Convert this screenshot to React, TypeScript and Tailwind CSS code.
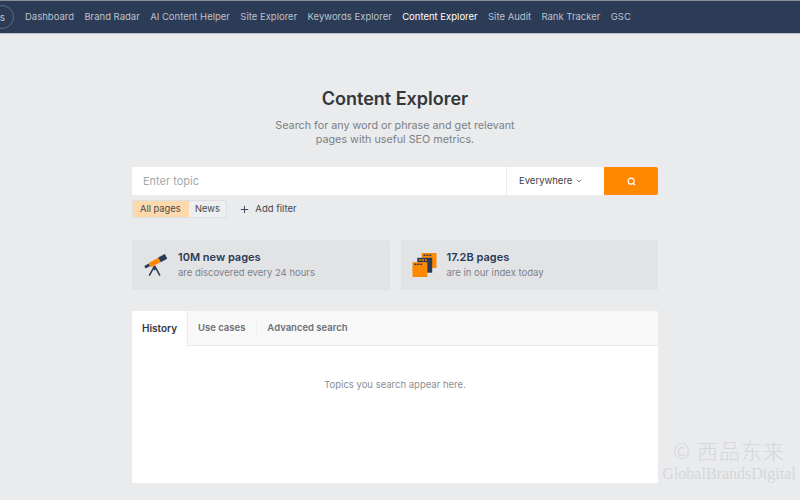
import { ChevronDown, Plus, Search } from "lucide-react";

const navItems = [
  "Dashboard",
  "Brand Radar",
  "AI Content Helper",
  "Site Explorer",
  "Keywords Explorer",
  "Content Explorer",
  "Site Audit",
  "Rank Tracker",
  "GSC",
];

const tabs = ["Use cases", "Advanced search"];

const TelescopeIcon = () => (
  <svg width="28" height="26" viewBox="0 0 28 26">
    <path d="M1.5 14 L6.5 11.2 L8 14 L3 16.8 Z" fill="#2b3a55" />
    <path d="M6.5 10.8 L17 5 L19.5 10 L8.8 15.6 Z" fill="#ff8800" />
    <path d="M17 4.6 L24.5 0.8 L27.2 6 L19.8 10 Z" fill="#2b3a55" />
    <path d="M13 14 L7 25 M13 14 L19 25 M13 14 L13 19" stroke="#2b3a55" strokeWidth="1.7" fill="none" />
  </svg>
);

const PagesIcon = () => (
  <svg width="26" height="26" viewBox="0 0 26 26">
    <rect x="10" y="0.5" width="15.5" height="15.5" fill="#ff8800" />
    <rect x="12" y="2" width="2" height="1.6" fill="#2b3a55" />
    <rect x="15" y="2" width="2" height="1.6" fill="#2b3a55" />
    <rect x="18" y="2" width="2" height="1.6" fill="#2b3a55" />
    <rect x="5.5" y="5.5" width="15.5" height="15.5" fill="#2b3a55" />
    <rect x="7.5" y="7" width="2" height="1.6" fill="#ff8800" />
    <rect x="10.5" y="7" width="2" height="1.6" fill="#ff8800" />
    <rect x="13.5" y="7" width="2" height="1.6" fill="#ff8800" />
    <rect x="0.5" y="10" width="15.5" height="15.5" fill="#ff8800" />
    <rect x="2.5" y="11.5" width="2" height="1.6" fill="#2b3a55" />
    <rect x="5.5" y="11.5" width="2" height="1.6" fill="#2b3a55" />
    <rect x="8.5" y="11.5" width="2" height="1.6" fill="#2b3a55" />
  </svg>
);

const StatCard = ({ icon, title, sub }: { icon: React.ReactNode; title: string; sub: string }) => (
  <div className="flex-1 h-[50px] bg-[#e1e3e5] flex items-center pl-[11px] gap-[10px] rounded-[1px]">
    <div className="w-[25px] flex justify-center shrink-0">{icon}</div>
    <div>
      <div className="text-[11px] leading-[15px] font-semibold text-[#2b3a55]">{title}</div>
      <div className="text-[9.5px] leading-[15px] text-[#7d828a]">{sub}</div>
    </div>
  </div>
);

export default function App() {
  return (
    <div className="relative h-[500px] w-[800px] overflow-hidden bg-[#e9ebed] font-['Inter',sans-serif]">
      <div className="h-[34px] bg-[#2c3b56] border-t border-t-[#8a8f99] border-b border-b-[#b8bcc4] flex items-center">
        <div className="h-[24px] w-[24px] -ml-[10px] mr-[11px] shrink-0 rounded-full border border-[#5f6b82] flex items-center justify-end pr-[8px] text-[10px] text-[#c3c8d2]">
          s
        </div>
        <nav className="flex gap-[10.4px]">
          {navItems.map((item) => (
            <a
              key={item}
              className={`text-[9.5px] whitespace-nowrap ${item === "Content Explorer" ? "text-white" : "text-[#bcc2cd]"}`}
            >
              {item}
            </a>
          ))}
        </nav>
      </div>

      <div className="w-[790px] flex flex-col items-center pt-[54px]">
        <h1 className="text-[18px] leading-[22px] font-semibold text-[#33363b]">Content Explorer</h1>
        <p className="mt-[9px] text-[10.75px] leading-[14px] text-[#7b7f86] text-center">
          Search for any word or phrase and get relevant
          <br />
          pages with useful SEO metrics.
        </p>

        <div className="w-[526px] mt-[20px]">
          <div className="flex h-[28px] rounded-[2px] overflow-hidden bg-white">
            <div className="flex-1 flex items-center pl-[11px] text-[11px] text-[#a4a8ae] border-r border-r-[#eceef0]">
              Enter topic
            </div>
            <div className="w-[97px] flex items-center pl-[12px] gap-[3px] text-[9.5px] text-[#3c4047]">
              Everywhere
              <ChevronDown size={8} strokeWidth={2} />
            </div>
            <div className="w-[54px] bg-[#ff8800] flex items-center justify-center text-white">
              <Search size={9} strokeWidth={3} />
            </div>
          </div>

          <div className="flex items-center mt-[5px] h-[18px]">
            <div className="flex h-[18px] rounded-[2px] border border-[#dcdee1] overflow-hidden text-[9.3px] text-[#44484f]">
              <span className="bg-[#fdd9ac] pl-[7px] pr-[8px] leading-[16px]">All pages</span>
              <span className="bg-[#eceef0] px-[6.5px] leading-[16px]">News</span>
            </div>
            <div className="flex items-center ml-[12px] gap-[5px] text-[9.5px] text-[#44484f]">
              <Plus size={11} strokeWidth={2} className="text-[#2b3a55]" />
              Add filter
            </div>
          </div>

          <div className="flex gap-[11px] mt-[22px]">
            <StatCard icon={<TelescopeIcon />} title="10M new pages" sub="are discovered every 24 hours" />
            <StatCard icon={<PagesIcon />} title="17.2B pages" sub="are in our index today" />
          </div>

          <div className="mt-[21px] h-[172px] bg-white">
            <div className="flex h-[35px] bg-[#f8f8f8] border-b border-b-[#e8e9eb]">
              <div className="w-[56px] h-[35px] bg-white flex items-center justify-center text-[10px] font-semibold text-[#33363b] border-r border-r-[#e8e9eb]">
                History
              </div>
              <div className="flex items-center text-[9.5px] font-semibold text-[#6c7077]">
                <span className="pl-[10px] pr-[11px]">{tabs[0]}</span>
                <span className="pl-[10px] border-l border-l-[#eceef0] leading-[14px]">{tabs[1]}</span>
              </div>
            </div>
            <div className="pt-[32px] text-center text-[9.5px] leading-[14px] text-[#8a8e94]">
              Topics you search appear here.
            </div>
          </div>
        </div>
      </div>

      <div className="absolute left-[660px] top-[438px] w-[138px] text-center text-[#d5d7db] pointer-events-none">
        <div className="text-[21px] leading-[24px] font-['Noto_Sans_CJK_SC',sans-serif] font-light tracking-[1px]">© 西品东来</div>
        <div className="text-[16px] leading-[20px] mt-[2px] whitespace-nowrap font-['Liberation_Serif',serif]">GlobalBrandsDigital</div>
      </div>
    </div>
  );
}
